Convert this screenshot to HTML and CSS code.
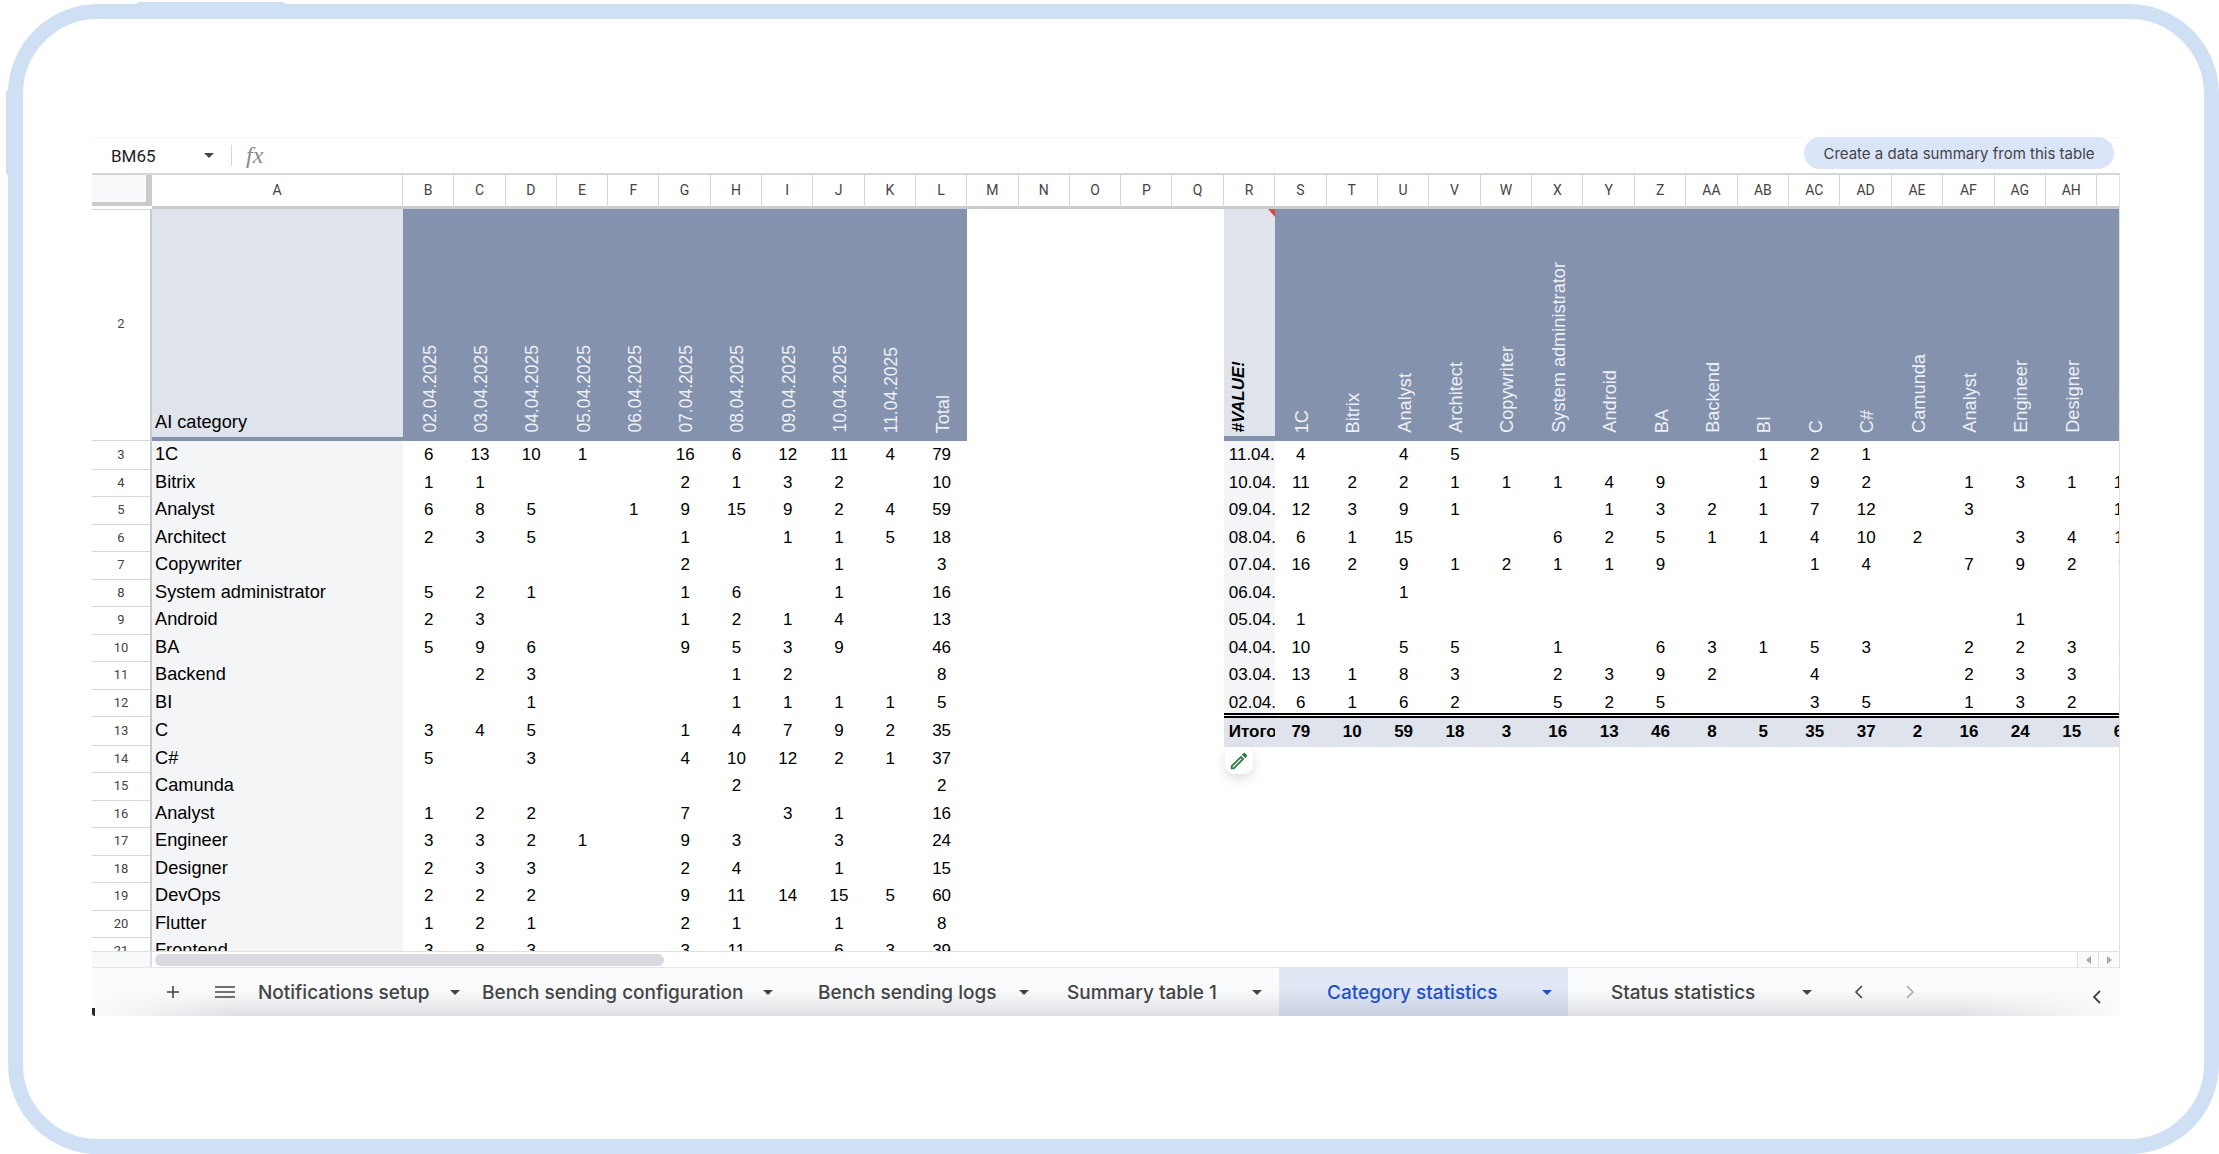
FILE: index.html
```html
<!DOCTYPE html>
<html lang="en">
<head>
  <meta charset="UTF-8" />
  <title>Category statistics</title>
  <link rel="stylesheet" href="styles.css">
</head>
<body>
  <div class="frame">
    <span class="bump-top"></span>
    <span class="bump-left"></span>

    <div class="sheet">
      <div class="toolbar">
        <span class="name-box">BM65</span>
        <span class="caret caret-name"></span>
        <span class="toolbar-sep"></span>
        <span class="fx">fx</span>
        <span class="summary-pill">Create a data summary from this table</span>
      </div>

      <div class="grid">
        <div class="row row-head">
          <span class="corner"></span>
          <span>A</span><span>B</span><span>C</span><span>D</span><span>E</span><span>F</span><span>G</span><span>H</span><span>I</span><span>J</span><span>K</span><span>L</span><span>M</span><span>N</span><span>O</span><span>P</span><span>Q</span><span>R</span><span>S</span><span>T</span><span>U</span><span>V</span><span>W</span><span>X</span><span>Y</span><span>Z</span><span>AA</span><span>AB</span><span>AC</span><span>AD</span><span>AE</span><span>AF</span><span>AG</span><span>AH</span><span></span>
        </div>

        <div class="row row-top">
          <span class="rh">2</span>
          <span class="top-cat">AI category</span>
          <span class="hd"><em>02.04.2025</em></span><span class="hd"><em>03.04.2025</em></span><span class="hd"><em>04.04.2025</em></span><span class="hd"><em>05.04.2025</em></span><span class="hd"><em>06.04.2025</em></span><span class="hd"><em>07.04.2025</em></span><span class="hd"><em>08.04.2025</em></span><span class="hd"><em>09.04.2025</em></span><span class="hd"><em>10.04.2025</em></span><span class="hd"><em>11.04.2025</em></span><span class="hd"><em>Total</em></span>
          <span class="top-value"><em>#VALUE!</em></span>
          <span class="hd"><em>1C</em></span><span class="hd"><em>Bitrix</em></span><span class="hd"><em>Analyst</em></span><span class="hd"><em>Architect</em></span><span class="hd"><em>Copywriter</em></span><span class="hd"><em>System administrator</em></span><span class="hd"><em>Android</em></span><span class="hd"><em>BA</em></span><span class="hd"><em>Backend</em></span><span class="hd"><em>BI</em></span><span class="hd"><em>C</em></span><span class="hd"><em>C#</em></span><span class="hd"><em>Camunda</em></span><span class="hd"><em>Analyst</em></span><span class="hd"><em>Engineer</em></span><span class="hd"><em>Designer</em></span><span class="hd"><em>DevOps</em></span>
        </div>

        <div class="row"><span class="rh">3</span><span class="cat">1C</span><span>6</span><span>13</span><span>10</span><span>1</span><span></span><span>16</span><span>6</span><span>12</span><span>11</span><span>4</span><span>79</span><span class="dt">11.04.</span><span>4</span><span></span><span>4</span><span>5</span><span></span><span></span><span></span><span></span><span></span><span>1</span><span>2</span><span>1</span><span></span><span></span><span></span><span></span><span>5</span></div>
        <div class="row"><span class="rh">4</span><span class="cat">Bitrix</span><span>1</span><span>1</span><span></span><span></span><span></span><span>2</span><span>1</span><span>3</span><span>2</span><span></span><span>10</span><span class="dt">10.04.</span><span>11</span><span>2</span><span>2</span><span>1</span><span>1</span><span>1</span><span>4</span><span>9</span><span></span><span>1</span><span>9</span><span>2</span><span></span><span>1</span><span>3</span><span>1</span><span>15</span></div>
        <div class="row"><span class="rh">5</span><span class="cat">Analyst</span><span>6</span><span>8</span><span>5</span><span></span><span>1</span><span>9</span><span>15</span><span>9</span><span>2</span><span>4</span><span>59</span><span class="dt">09.04.</span><span>12</span><span>3</span><span>9</span><span>1</span><span></span><span></span><span>1</span><span>3</span><span>2</span><span>1</span><span>7</span><span>12</span><span></span><span>3</span><span></span><span></span><span>14</span></div>
        <div class="row"><span class="rh">6</span><span class="cat">Architect</span><span>2</span><span>3</span><span>5</span><span></span><span></span><span>1</span><span></span><span>1</span><span>1</span><span>5</span><span>18</span><span class="dt">08.04.</span><span>6</span><span>1</span><span>15</span><span></span><span></span><span>6</span><span>2</span><span>5</span><span>1</span><span>1</span><span>4</span><span>10</span><span>2</span><span></span><span>3</span><span>4</span><span>11</span></div>
        <div class="row"><span class="rh">7</span><span class="cat">Copywriter</span><span></span><span></span><span></span><span></span><span></span><span>2</span><span></span><span></span><span>1</span><span></span><span>3</span><span class="dt">07.04.</span><span>16</span><span>2</span><span>9</span><span>1</span><span>2</span><span>1</span><span>1</span><span>9</span><span></span><span></span><span>1</span><span>4</span><span></span><span>7</span><span>9</span><span>2</span><span>9</span></div>
        <div class="row"><span class="rh">8</span><span class="cat">System administrator</span><span>5</span><span>2</span><span>1</span><span></span><span></span><span>1</span><span>6</span><span></span><span>1</span><span></span><span>16</span><span class="dt">06.04.</span><span></span><span></span><span>1</span></div>
        <div class="row"><span class="rh">9</span><span class="cat">Android</span><span>2</span><span>3</span><span></span><span></span><span></span><span>1</span><span>2</span><span>1</span><span>4</span><span></span><span>13</span><span class="dt">05.04.</span><span>1</span><span></span><span></span><span></span><span></span><span></span><span></span><span></span><span></span><span></span><span></span><span></span><span></span><span></span><span>1</span></div>
        <div class="row"><span class="rh">10</span><span class="cat">BA</span><span>5</span><span>9</span><span>6</span><span></span><span></span><span>9</span><span>5</span><span>3</span><span>9</span><span></span><span>46</span><span class="dt">04.04.</span><span>10</span><span></span><span>5</span><span>5</span><span></span><span>1</span><span></span><span>6</span><span>3</span><span>1</span><span>5</span><span>3</span><span></span><span>2</span><span>2</span><span>3</span><span>2</span></div>
        <div class="row"><span class="rh">11</span><span class="cat">Backend</span><span></span><span>2</span><span>3</span><span></span><span></span><span></span><span>1</span><span>2</span><span></span><span></span><span>8</span><span class="dt">03.04.</span><span>13</span><span>1</span><span>8</span><span>3</span><span></span><span>2</span><span>3</span><span>9</span><span>2</span><span></span><span>4</span><span></span><span></span><span>2</span><span>3</span><span>3</span><span>2</span></div>
        <div class="row row-tall"><span class="rh">12</span><span class="cat">BI</span><span></span><span></span><span>1</span><span></span><span></span><span></span><span>1</span><span>1</span><span>1</span><span>1</span><span>5</span><span class="dt">02.04.</span><span>6</span><span>1</span><span>6</span><span>2</span><span></span><span>5</span><span>2</span><span>5</span><span></span><span></span><span>3</span><span>5</span><span></span><span>1</span><span>3</span><span>2</span><span>2</span></div>
        <div class="row"><span class="rh">13</span><span class="cat">C</span><span>3</span><span>4</span><span>5</span><span></span><span></span><span>1</span><span>4</span><span>7</span><span>9</span><span>2</span><span>35</span><span class="tot tot-first">Итого</span><span class="tot">79</span><span class="tot">10</span><span class="tot">59</span><span class="tot">18</span><span class="tot">3</span><span class="tot">16</span><span class="tot">13</span><span class="tot">46</span><span class="tot">8</span><span class="tot">5</span><span class="tot">35</span><span class="tot">37</span><span class="tot">2</span><span class="tot">16</span><span class="tot">24</span><span class="tot">15</span><span class="tot">60</span></div>
        <div class="row"><span class="rh">14</span><span class="cat">C#</span><span>5</span><span></span><span>3</span><span></span><span></span><span>4</span><span>10</span><span>12</span><span>2</span><span>1</span><span>37</span>
          <span class="pencil-cell">
            <span class="pencil">
              <svg viewBox="0 0 24 24" width="22" height="22"><path fill="#2f7d46" d="M3 17.25V21h3.75L17.81 9.94l-3.75-3.75L3 17.25zM5.92 19H5v-.92l9.06-9.06.92.92L5.92 19zM20.71 7.04a1 1 0 0 0 0-1.41l-2.34-2.34a1 1 0 0 0-1.41 0l-1.83 1.83 3.75 3.75 1.83-1.83z"/></svg>
            </span>
          </span>
        </div>
        <div class="row"><span class="rh">15</span><span class="cat">Camunda</span><span></span><span></span><span></span><span></span><span></span><span></span><span>2</span><span></span><span></span><span></span><span>2</span></div>
        <div class="row"><span class="rh">16</span><span class="cat">Analyst</span><span>1</span><span>2</span><span>2</span><span></span><span></span><span>7</span><span></span><span>3</span><span>1</span><span></span><span>16</span></div>
        <div class="row"><span class="rh">17</span><span class="cat">Engineer</span><span>3</span><span>3</span><span>2</span><span>1</span><span></span><span>9</span><span>3</span><span></span><span>3</span><span></span><span>24</span></div>
        <div class="row"><span class="rh">18</span><span class="cat">Designer</span><span>2</span><span>3</span><span>3</span><span></span><span></span><span>2</span><span>4</span><span></span><span>1</span><span></span><span>15</span></div>
        <div class="row"><span class="rh">19</span><span class="cat">DevOps</span><span>2</span><span>2</span><span>2</span><span></span><span></span><span>9</span><span>11</span><span>14</span><span>15</span><span>5</span><span>60</span></div>
        <div class="row"><span class="rh">20</span><span class="cat">Flutter</span><span>1</span><span>2</span><span>1</span><span></span><span></span><span>2</span><span>1</span><span></span><span>1</span><span></span><span>8</span></div>
        <div class="row"><span class="rh">21</span><span class="cat">Frontend</span><span>3</span><span>8</span><span>3</span><span></span><span></span><span>3</span><span>11</span><span></span><span>6</span><span>3</span><span>39</span></div>
      </div>

      <div class="scroll-row">
        <span class="scroll-corner"></span>
        <span class="scroll-thumb"></span>
        <span class="scroll-btn"><span class="tri tri-left"></span></span>
        <span class="scroll-btn"><span class="tri tri-right"></span></span>
      </div>

      <div class="tabs">
        <span class="tab-icon tab-plus">
          <svg viewBox="0 0 14 14" width="14" height="14"><path d="M7 1v12M1 7h12" stroke="#444" stroke-width="1.6" fill="none"/></svg>
        </span>
        <span class="tab-icon tab-menu">
          <svg viewBox="0 0 20 12" width="20" height="12"><path d="M0 1h20M0 6h20M0 11h20" stroke="#444" stroke-width="1.6" fill="none"/></svg>
        </span>
        <div class="tab tab-notif">Notifications setup<span class="caret"></span></div>
        <div class="tab tab-config">Bench sending configuration<span class="caret"></span></div>
        <div class="tab tab-logs">Bench sending logs<span class="caret"></span></div>
        <div class="tab tab-summary">Summary table 1<span class="caret"></span></div>
        <div class="tab tab-active">Category statistics<span class="caret"></span></div>
        <div class="tab tab-status">Status statistics<span class="caret"></span></div>
        <span class="tab-icon">
          <svg viewBox="0 0 10 16" width="10" height="16"><path d="M8 2L2 8l6 6" stroke="#444" stroke-width="1.6" fill="none"/></svg>
        </span>
        <span class="tab-icon">
          <svg viewBox="0 0 10 16" width="10" height="16"><path d="M2 2l6 6-6 6" stroke="#aaa" stroke-width="1.6" fill="none"/></svg>
        </span>
        <span class="tab-icon tab-collapse">
          <svg viewBox="0 0 10 16" width="10" height="16"><path d="M8 2L2 8l6 6" stroke="#444" stroke-width="1.8" fill="none"/></svg>
        </span>
        <span class="corner-mark"></span>
      </div>
    </div>
  </div>
</body>
</html>
```

FILE: styles.css
```css
/* page + outer rounded frame */
html, body {
  margin: 0;
  height: 100%;
  background: #fff;
  overflow: hidden;
}
.frame {
  position: relative;
  box-sizing: border-box;
  width: 2211px;
  height: 1150px;
  margin: 4px 0 0 8px;
  padding: 118px 0 0 69px;
  border: 15px solid #cfe0f5;
  border-radius: 90px;
  font-family: "Liberation Sans", Arial, sans-serif;
  font-size: 17px;
  color: #000;
}
.bump-top {
  position: absolute;
  left: 113px;
  top: -17px;
  width: 150px;
  height: 4px;
  background: #cfe0f5;
  border-radius: 6px 6px 0 0;
}
.bump-left {
  position: absolute;
  left: -17px;
  top: 71px;
  width: 3px;
  height: 85px;
  background: #cfe0f5;
  border-radius: 3px 0 0 3px;
}

.sheet {
  width: 2028px;
}

/* formula bar */
.toolbar {
  display: flex;
  align-items: center;
  box-sizing: border-box;
  height: 38px;
  padding: 0 6px 0 19px;
  border-top: 1px solid #f7f7f7;
  border-bottom: 2px solid #d4d6d8;
}
.name-box {
  width: 93px;
  font-family: Roboto, sans-serif;
  font-size: 17px;
  color: #222;
}
.caret {
  display: inline-block;
  width: 0;
  height: 0;
  margin-left: auto;
  border-left: 5px solid transparent;
  border-right: 5px solid transparent;
  border-top: 5px solid #444;
}
.caret-name {
  margin-left: 0;
}
.toolbar-sep {
  width: 1px;
  height: 21px;
  margin: 0 14px 0 17px;
  background: #d6d6d6;
}
.fx {
  font-family: "Liberation Serif", serif;
  font-style: italic;
  font-size: 24px;
  color: #8a8a8a;
}
.summary-pill {
  display: flex;
  align-items: center;
  justify-content: center;
  width: 310px;
  height: 32px;
  margin: 0 0 5px auto;
  background: #dbe5fa;
  border-radius: 16px;
  font-family: Inter, sans-serif;
  font-size: 15px;
  color: #444;
}

/* grid */
.grid {
  box-sizing: border-box;
  height: 776px;
  overflow: hidden;
  border-right: 1px solid #e0e0e0;
}
.row {
  display: grid;
  grid-template-columns: 60px 251px repeat(16, 51.3px) repeat(18, 51.4px);
  height: 27.5px;
  line-height: 27.5px;
  text-align: center;
}
.row-tall {
  height: 28.5px;
}
.rh {
  border-right: 2px solid #c8cacc;
  border-bottom: 1px solid #d8d8d8;
  font-family: Roboto, sans-serif;
  font-size: 13px;
  color: #444;
}
.cat {
  padding-left: 3px;
  background: #f3f5f7;
  font-size: 18.2px;
  text-align: left;
}
.dt {
  grid-column: 19;
  padding-left: 5px;
  overflow: hidden;
  background: #f3f5f7;
  text-align: left;
  white-space: nowrap;
}

/* column letters */
.row-head {
  height: 34px;
  line-height: 31px;
  font-family: Roboto, sans-serif;
  font-size: 14px;
  color: #444;
}
.row-head span {
  box-sizing: border-box;
  border-right: 1px solid #d4d6d8;
  border-bottom: 3px solid #c9cccf;
}
.row-head .corner {
  height: 31px;
  background: #f8f9fa;
  border-right: 6px solid #c8cacc;
  border-bottom: 4px solid #c8cacc;
}

/* tall row 2 */
.row-top {
  height: 232px;
}
.row-top .rh {
  line-height: 228px;
  border-top: 1px solid #d8d8d8;
}
.top-cat {
  display: flex;
  align-items: flex-end;
  padding: 0 0 1px 3px;
  background: #dfe3eb;
  border-bottom: 4px solid #8592ae;
  font-size: 18.2px;
}
.hd {
  display: flex;
  align-items: flex-end;
  justify-content: center;
  padding: 0 0 8px 2px;
  background: #8592ae;
  color: #edf0f5;
  font-size: 18.2px;
}
.hd:nth-child(-n+12) {
  font-size: 17.5px;
}
.row-top .hd:last-child {
  padding-left: 6px;
}
.hd em, .top-value em {
  font-style: normal;
  line-height: 20px;
  white-space: nowrap;
  writing-mode: vertical-rl;
  transform: rotate(180deg);
}
.top-value {
  position: relative;
  grid-column: 19;
  display: flex;
  align-items: flex-end;
  padding: 0 0 4px 5px;
  background: #dfe3eb;
  border-bottom: 5px solid #8592ae;
}
.top-value em {
  font-style: italic;
  font-weight: 700;
}
.top-value::after {
  content: "";
  position: absolute;
  top: 0;
  right: 0;
  border-top: 8px solid #e0483a;
  border-left: 7px solid transparent;
}

/* Итого row */
.tot {
  margin: -4px 0 -1.5px;
  background: #dfe3eb;
  background-clip: padding-box;
  border-top: 5px double #000;
  font-weight: 700;
}
.tot-first {
  grid-column: 19;
  padding-left: 5px;
  overflow: hidden;
  text-align: left;
}

/* floating pencil under the table */
.pencil-cell {
  position: relative;
  grid-column: 19;
}
.pencil {
  position: absolute;
  left: 1px;
  top: 2.5px;
  display: flex;
  align-items: center;
  justify-content: center;
  width: 28px;
  height: 27px;
  background: #fff;
  border-radius: 9px;
  box-shadow: 0 4px 12px rgb(0 0 0 / 0.14);
}

/* horizontal scrollbar */
.scroll-row {
  display: flex;
  align-items: center;
  box-sizing: border-box;
  height: 17px;
  border-top: 1px solid #e0e0e0;
  border-right: 1px solid #e0e0e0;
  border-bottom: 1px solid #e6e6e6;
}
.scroll-corner {
  box-sizing: border-box;
  width: 60px;
  height: 100%;
  background: #f8f9fa;
  border-right: 2px solid #dcdee0;
}
.scroll-thumb {
  width: 509px;
  height: 12px;
  margin-left: 3px;
  margin-right: auto;
  background: #d9dadf;
  border-radius: 6px;
}
.scroll-btn {
  display: flex;
  align-items: center;
  justify-content: center;
  box-sizing: border-box;
  width: 21px;
  height: 100%;
  background: #fafafa;
  border-left: 1px solid #dedede;
}
.tri {
  width: 0;
  height: 0;
  border-top: 4px solid transparent;
  border-bottom: 4px solid transparent;
}
.tri-left {
  border-right: 5px solid #aaa;
}
.tri-right {
  border-left: 5px solid #aaa;
}

/* sheet tabs */
.tabs {
  position: relative;
  display: grid;
  grid-template-columns: 106px 50px 225px 335px 249px 222px 289px 272px 38px 64px 1fr;
  height: 48px;
  background:
    linear-gradient(90deg, #f9fbfd 0, rgb(249 251 253 / 0) 7%, rgb(249 251 253 / 0) 92%, #f9fbfd 100%),
    linear-gradient(#f9fbfd 45%, #dfe0e3);
  font-family: Inter, sans-serif;
  font-weight: 500;
  font-size: 19px;
  color: #444;
}
.tab-icon {
  display: flex;
  align-items: center;
  justify-content: center;
}
.tab-plus {
  padding-left: 56px;
}
.tab-menu {
  padding-left: 4px;
}
.tab-collapse {
  justify-content: flex-end;
  padding: 10px 18px 0 0;
}
.tab {
  display: flex;
  align-items: center;
  padding-left: 10px;
  white-space: nowrap;
}
.tab-notif { padding-right: 13px; }
.tab-config { padding-left: 9px; padding-right: 35px; }
.tab-logs { padding-right: 28px; }
.tab-summary { padding-right: 17px; }
.tab-active {
  padding-left: 48px;
  padding-right: 16px;
  background: linear-gradient(#e1e7f4 40%, #c9d0e1);
  color: #1f52c9;
}
.tab-active .caret {
  border-top-color: #1f52c9;
}
.tab-status {
  padding-left: 43px;
  padding-right: 28px;
}
.corner-mark {
  position: absolute;
  left: 0;
  bottom: 0;
  width: 3px;
  height: 8px;
  background: #1c2a1c;
  border-radius: 0 0 0 3px;
}
```
